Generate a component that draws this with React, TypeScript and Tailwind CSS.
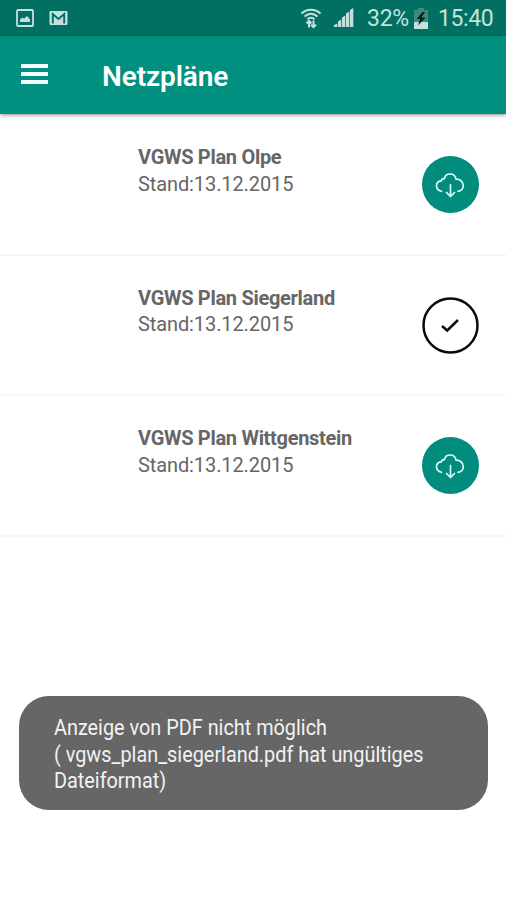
const CloudButton = () => (
  <div className="flex size-[57px] items-center justify-center rounded-full bg-[#018c7e]">
    <svg className="mr-px" width="30" height="26" viewBox="0 0 30 26" fill="none" stroke="#dcfffa" strokeWidth="1.7" strokeLinecap="round" strokeLinejoin="round">
      <path d="M6.500 19.300C3.500 18.500 1.500 16.500 1.500 13.700C1.500 11 3.500 9 6.300 8.800C6.600 7.200 8 6.400 9.300 6.700C10 3.800 12.300 2 15 2C18.300 2 20.500 4 21 7.200C24.500 7 28.300 9.500 28.300 13.600C28.300 17 26 19.200 23 19.300" />
      <path d="M15.500 12.500V24.500M11.500 20.500L15.500 24.500L19.500 20.500" />
    </svg>
  </div>
);

const CheckButton = () => (
  <div className="flex size-[57px] items-center justify-center rounded-full bg-white">
    <svg width="57" height="57" viewBox="0 0 57 57" fill="none" stroke="#0a0a0a" strokeWidth="2.5">
      <circle cx="28.500" cy="28.500" r="27" />
      <path d="M20 29L25.200 33.500L36 23" />
    </svg>
  </div>
);

const plans = [
  { name: "VGWS Plan Olpe", loaded: false },
  { name: "VGWS Plan Siegerland", loaded: true },
  { name: "VGWS Plan Wittgenstein", loaded: false },
];

const StatusBar = () => (
  <div className="flex h-9 items-center bg-[#017063] pl-4 pr-3 text-[#c3e2dd]">
    <svg width="18" height="18" viewBox="0 0 18 18" fill="none">
      <rect x="1" y="1" width="16" height="16" rx="1" stroke="currentColor" strokeWidth="1.800" />
      <path d="M4 13V10.500L6.500 8.500L8 9.800L11 7L14 10.500V13Z" fill="currentColor" />
    </svg>
    <svg className="ml-[15px]" width="19" height="16" viewBox="0 0 19 16">
      <rect x="0.500" y="1" width="18" height="14" rx="1.200" fill="currentColor" />
      <path d="M3.800 13.500V4L9.500 9L15.200 4V13.500" fill="none" stroke="#017063" strokeWidth="1.900" />
    </svg>
    <div className="ml-auto flex items-center">
      <svg width="22" height="21" viewBox="0 0 22 21" fill="none" stroke="currentColor" strokeWidth="2.200">
        <path d="M1.500 5.500C7 .5 15 .5 20.500 5.500M4.500 8.500C8.500 5 13.500 5 17.500 8.500M7.500 11.300C9.500 9.500 12.500 9.500 14.500 11.300" />
        <path d="M9 19.500V13M6.500 15.300L9 12.800L11.500 15.300M13.500 12.500V19M11 16.700L13.500 19.200L16 16.700" strokeWidth="2" />
      </svg>
      <svg className="ml-[12px]" width="20" height="20" viewBox="0 0 20 20" fill="currentColor">
        <path d="M0 19V17L3.300 15.500V19ZM4 19V13.500L7.300 11.500V19ZM8 19V9.500L11.300 7.500V19ZM12 19V5.500L15.300 3.500V19ZM16 19V2L19.300 0V19Z" />
      </svg>
      <span className="ml-[13px] w-[42px] whitespace-nowrap pt-0.5 text-[23px] leading-[34px] tracking-[-0.3px]">32%</span>
      <svg className="ml-[5px]" width="14" height="21" viewBox="0 0 14 21">
        <path d="M4 0H10V2H14V21H0V2H4Z" fill="#3a8b80" />
        <path d="M0 14H14V21H0Z" fill="currentColor" />
        <path d="M8.500 4L2.500 11H6L4 17.500L11.500 9.500H7.500L11 4Z" fill="#06221e" />
      </svg>
      <span className="ml-[10px] w-[56px] whitespace-nowrap pt-0.5 text-[23px] leading-[34px] tracking-[-0.4px]">15:40</span>
    </div>
  </div>
);

export default function App() {
  return (
    <div className="flex h-[900px] w-[506px] flex-col overflow-hidden bg-white font-[Roboto,sans-serif]">
      <StatusBar />
      <header className="relative flex h-[78px] shrink-0 items-center bg-[#018f80] pl-[21px] shadow-[0_1px_4px_rgba(0,0,0,0.45)]">
        <div className="mb-0.5 flex w-[27px] flex-col gap-1">
          <div className="h-1 bg-[#f2fffd]" />
          <div className="h-1 bg-[#f2fffd]" />
          <div className="h-1 bg-[#f2fffd]" />
        </div>
        <h1 className="ml-[54px] pt-1 text-[28px] font-semibold leading-9 tracking-[-0.1px] text-white">Netzpläne</h1>
      </header>
      <main className="pt-px">
        {plans.map((plan) => (
          <section key={plan.name} className="flex h-[140.700px] justify-between border-b-2 border-[#f6f6f6] pl-[138px] pr-[27px]">
            <div className="pt-[29px] text-[20px] leading-[26.500px] text-[#666]">
              <h2 className="font-bold tracking-[-0.300px]">{plan.name}</h2>
              <p className="tracking-[-0.100px]">Stand:13.12.2015</p>
            </div>
            <div className="pt-[41px]">{plan.loaded ? <CheckButton /> : <CloudButton />}</div>
          </section>
        ))}
      </main>
      <div className="ml-[19px] mt-[159px] h-[114px] w-[469px] rounded-[30px] bg-[#666] pl-[35px] pt-[19px]">
        <p className="w-[440px] origin-left scale-x-[0.902] whitespace-nowrap text-[22px] leading-[26.700px] text-[#f2f2f2]">
          Anzeige von PDF nicht möglich
          <br />( vgws_plan_siegerland.pdf hat ungültiges
          <br />
          Dateiformat)
        </p>
      </div>
    </div>
  );
}
